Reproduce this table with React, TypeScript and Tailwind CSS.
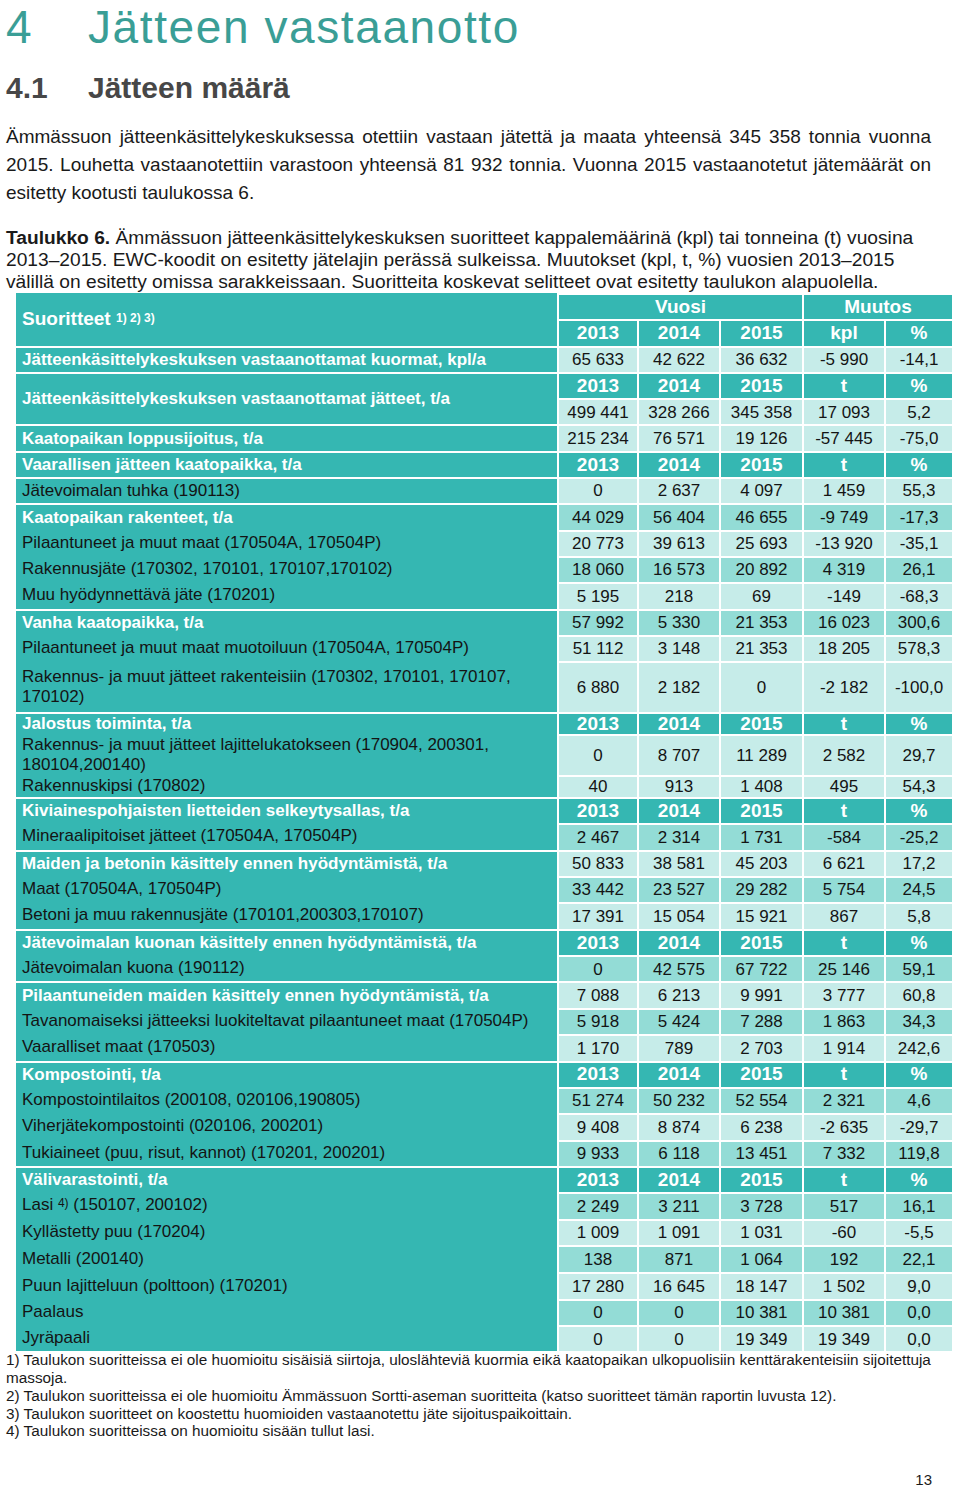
import React from "react";

type Shade = "l" | "d";

const numCellBase =
  "flex items-center justify-center border-l-2 border-t-2 border-white text-[17px] text-[#141414]";
const hdrCell =
  "flex items-center justify-center border-l-2 border-t-2 border-white bg-[#35b7b2] text-white font-bold text-[19px]";

function LabelCell({
  children,
  bold,
  top,
}: {
  children: React.ReactNode;
  bold?: boolean;
  top?: boolean;
}) {
  return (
    <div
      className={
        "flex items-center pl-[6px] pr-[4px] bg-[#35b7b2] text-[17px] leading-[20px] " +
        (bold ? "font-bold text-white " : "text-[#141414] ") +
        (top ? "border-t-2 border-white" : "")
      }
    >
      <div>{children}</div>
    </div>
  );
}

function DataRow({
  label,
  bold,
  top,
  vals,
  shade,
}: {
  label: React.ReactNode;
  bold?: boolean;
  top?: boolean;
  vals: string[];
  shade: Shade;
}) {
  const bg = shade === "d" ? "bg-[#93dcd6]" : "bg-[#c6ece9]";
  return (
    <>
      <LabelCell bold={bold} top={top}>
        {label}
      </LabelCell>
      {vals.map((v, i) => (
        <div key={i} className={numCellBase + " " + bg}>
          {v}
        </div>
      ))}
    </>
  );
}

function HdrRow({ label, unit }: { label: string; unit: string }) {
  return (
    <>
      <LabelCell bold top>
        {label}
      </LabelCell>
      <div className={hdrCell}>2013</div>
      <div className={hdrCell}>2014</div>
      <div className={hdrCell}>2015</div>
      <div className={hdrCell}>{unit}</div>
      <div className={hdrCell}>%</div>
    </>
  );
}

export default function App() {
  return (
    <div className="w-[960px] min-h-[1487px] overflow-hidden bg-white font-['Liberation_Sans',Arial,sans-serif] text-[#141414]">
      {/* Heading 1 */}
      <div className="flex pt-[4px] pl-[6px] text-[46px] leading-none tracking-[1.6px] text-[#3a9e96]">
        <span className="w-[82px]">4</span>
        <span>Jätteen vastaanotto</span>
      </div>
      {/* Heading 2 */}
      <div className="flex mt-[23px] pl-[6px] text-[30px] leading-[30px] font-bold text-[#474747]">
        <span className="w-[82px]">4.1</span>
        <span>Jätteen määrä</span>
      </div>

      {/* Paragraph */}
      <div className="mt-[20px] ml-[6px] w-[925px] text-[19px] leading-[28px] text-[#1a1a1a]">
        <div className="text-justify [text-align-last:justify] whitespace-nowrap">
          Ämmässuon jätteenkäsittelykeskuksessa otettiin vastaan jätettä ja maata yhteensä 345 358 tonnia vuonna
        </div>
        <div className="text-justify [text-align-last:justify] whitespace-nowrap">
          2015. Louhetta vastaanotettiin varastoon yhteensä 81 932 tonnia. Vuonna 2015 vastaanotetut jätemäärät on
        </div>
        <div>esitetty kootusti taulukossa 6.</div>
      </div>

      {/* Caption */}
      <div className="mt-[20px] pl-[6px] text-[19.2px] leading-[22px] text-[#1a1a1a] whitespace-nowrap">
        <div>
          <span className="font-bold">Taulukko 6.</span> Ämmässuon jätteenkäsittelykeskuksen suoritteet kappalemäärinä (kpl) tai tonneina (t) vuosina
        </div>
        <div>
          2013–2015. EWC-koodit on esitetty jätelajin perässä sulkeissa. Muutokset (kpl, t, %) vuosien 2013–2015
        </div>
        <div>välillä on esitetty omissa sarakkeissaan. Suoritteita koskevat selitteet ovat esitetty taulukon alapuolella.</div>
      </div>

      {/* Table */}
      <div className="mt-0 ml-[16px] w-[936px] grid grid-cols-[541px_80px_82px_83px_82px_68px] grid-rows-[repeat(14,26.3px)_51px_22px_41px_22px_26px_repeat(3,26.35px)_26.6px_repeat(12,26.35px)_27.5px_repeat(3,26.35px)]">
        {/* r0 - r1 */}
        <div className="row-span-2 flex items-center pl-[6px] bg-[#35b7b2] text-white font-bold text-[19px]">
          <span>
            Suoritteet <sup className="text-[12px] relative -top-[3px]">1) 2) 3)</sup>
          </span>
        </div>
        <div className={hdrCell + " col-span-3"}>Vuosi</div>
        <div className={hdrCell + " col-span-2"}>Muutos</div>
        <div className={hdrCell}>2013</div>
        <div className={hdrCell}>2014</div>
        <div className={hdrCell}>2015</div>
        <div className={hdrCell}>kpl</div>
        <div className={hdrCell}>%</div>

        {/* r2 */}
        <DataRow
          label="Jätteenkäsittelykeskuksen vastaanottamat kuormat, kpl/a"
          bold
          top
          vals={["65 633", "42 622", "36 632", "-5 990", "-14,1"]}
          shade="l"
        />
        {/* r3 - r4 */}
        <div className="row-span-2 flex items-center pl-[6px] bg-[#35b7b2] text-white font-bold text-[17px] border-t-2 border-white">
          Jätteenkäsittelykeskuksen vastaanottamat jätteet, t/a
        </div>
        <div className={hdrCell}>2013</div>
        <div className={hdrCell}>2014</div>
        <div className={hdrCell}>2015</div>
        <div className={hdrCell}>t</div>
        <div className={hdrCell}>%</div>
        <div className={numCellBase + " bg-[#c6ece9]"}>499 441</div>
        <div className={numCellBase + " bg-[#c6ece9]"}>328 266</div>
        <div className={numCellBase + " bg-[#c6ece9]"}>345 358</div>
        <div className={numCellBase + " bg-[#c6ece9]"}>17 093</div>
        <div className={numCellBase + " bg-[#c6ece9]"}>5,2</div>

        {/* r5 */}
        <DataRow label="Kaatopaikan loppusijoitus, t/a" bold top vals={["215 234", "76 571", "19 126", "-57 445", "-75,0"]} shade="l" />
        {/* r6 */}
        <HdrRow label="Vaarallisen jätteen kaatopaikka, t/a" unit="t" />
        {/* r7 */}
        <DataRow label="Jätevoimalan tuhka (190113)" top vals={["0", "2 637", "4 097", "1 459", "55,3"]} shade="l" />
        {/* r8 */}
        <DataRow label="Kaatopaikan rakenteet, t/a" bold top vals={["44 029", "56 404", "46 655", "-9 749", "-17,3"]} shade="d" />
        <DataRow label="Pilaantuneet ja muut maat (170504A, 170504P)" vals={["20 773", "39 613", "25 693", "-13 920", "-35,1"]} shade="l" />
        <DataRow label="Rakennusjäte (170302, 170101, 170107,170102)" vals={["18 060", "16 573", "20 892", "4 319", "26,1"]} shade="d" />
        <DataRow label="Muu hyödynnettävä jäte (170201)" vals={["5 195", "218", "69", "-149", "-68,3"]} shade="l" />
        {/* r12 */}
        <DataRow label="Vanha kaatopaikka, t/a" bold top vals={["57 992", "5 330", "21 353", "16 023", "300,6"]} shade="d" />
        <DataRow label="Pilaantuneet ja muut maat muotoiluun (170504A, 170504P)" vals={["51 112", "3 148", "21 353", "18 205", "578,3"]} shade="l" />
        <DataRow
          label={
            <>
              Rakennus- ja muut jätteet rakenteisiin (170302, 170101, 170107,
              <br />
              170102)
            </>
          }
          vals={["6 880", "2 182", "0", "-2 182", "-100,0"]}
          shade="l"
        />
        {/* r15 */}
        <HdrRow label="Jalostus toiminta, t/a" unit="t" />
        <DataRow
          label={
            <>
              Rakennus- ja muut jätteet lajittelukatokseen (170904, 200301,
              <br />
              180104,200140)
            </>
          }
          vals={["0", "8 707", "11 289", "2 582", "29,7"]}
          shade="l"
        />
        <DataRow label="Rakennuskipsi (170802)" vals={["40", "913", "1 408", "495", "54,3"]} shade="l" />
        {/* r18 */}
        <HdrRow label="Kiviainespohjaisten lietteiden selkeytysallas, t/a" unit="t" />
        <DataRow label="Mineraalipitoiset jätteet (170504A, 170504P)" vals={["2 467", "2 314", "1 731", "-584", "-25,2"]} shade="d" />
        <DataRow label="Maiden ja betonin käsittely ennen hyödyntämistä, t/a" bold top vals={["50 833", "38 581", "45 203", "6 621", "17,2"]} shade="l" />
        <DataRow label="Maat (170504A, 170504P)" vals={["33 442", "23 527", "29 282", "5 754", "24,5"]} shade="d" />
        <DataRow label="Betoni ja muu rakennusjäte (170101,200303,170107)" vals={["17 391", "15 054", "15 921", "867", "5,8"]} shade="l" />
        {/* r23 */}
        <HdrRow label="Jätevoimalan kuonan käsittely ennen hyödyntämistä, t/a" unit="t" />
        <DataRow label="Jätevoimalan kuona (190112)" vals={["0", "42 575", "67 722", "25 146", "59,1"]} shade="d" />
        <DataRow label="Pilaantuneiden maiden käsittely ennen hyödyntämistä, t/a" bold top vals={["7 088", "6 213", "9 991", "3 777", "60,8"]} shade="l" />
        <DataRow label="Tavanomaiseksi jätteeksi luokiteltavat pilaantuneet maat (170504P)" vals={["5 918", "5 424", "7 288", "1 863", "34,3"]} shade="d" />
        <DataRow label="Vaaralliset maat (170503)" vals={["1 170", "789", "2 703", "1 914", "242,6"]} shade="l" />
        {/* r28 */}
        <HdrRow label="Kompostointi, t/a" unit="t" />
        <DataRow label="Kompostointilaitos (200108, 020106,190805)" vals={["51 274", "50 232", "52 554", "2 321", "4,6"]} shade="d" />
        <DataRow label="Viherjätekompostointi (020106, 200201)" vals={["9 408", "8 874", "6 238", "-2 635", "-29,7"]} shade="l" />
        <DataRow label="Tukiaineet (puu, risut, kannot) (170201, 200201)" vals={["9 933", "6 118", "13 451", "7 332", "119,8"]} shade="d" />
        {/* r32 */}
        <HdrRow label="Välivarastointi, t/a" unit="t" />
        <DataRow
          label={
            <>
              Lasi <sup className="text-[12px] relative -top-[3px]">4)</sup> (150107, 200102)
            </>
          }
          vals={["2 249", "3 211", "3 728", "517", "16,1"]}
          shade="d"
        />
        <DataRow label="Kyllästetty puu (170204)" vals={["1 009", "1 091", "1 031", "-60", "-5,5"]} shade="l" />
        <DataRow label="Metalli (200140)" vals={["138", "871", "1 064", "192", "22,1"]} shade="d" />
        <DataRow label="Puun lajitteluun (polttoon) (170201)" vals={["17 280", "16 645", "18 147", "1 502", "9,0"]} shade="l" />
        <DataRow label="Paalaus" vals={["0", "0", "10 381", "10 381", "0,0"]} shade="d" />
        <DataRow label="Jyräpaali" vals={["0", "0", "19 349", "19 349", "0,0"]} shade="l" />
      </div>

      {/* Footnotes */}
      <div className="mt-0 pl-[6px] text-[15.3px] leading-[17.7px] text-[#1a1a1a] whitespace-nowrap">
        <div>
          1) Taulukon suoritteissa ei ole huomioitu sisäisiä siirtoja, uloslähteviä kuormia eikä kaatopaikan ulkopuolisiin kenttärakenteisiin sijoitettuja
        </div>
        <div>massoja.</div>
        <div>
          2) Taulukon suoritteissa ei ole huomioitu Ämmässuon Sortti-aseman suoritteita (katso suoritteet tämän raportin luvusta 12).
        </div>
        <div>3) Taulukon suoritteet on koostettu huomioiden vastaanotettu jäte sijoituspaikoittain.</div>
        <div>4) Taulukon suoritteissa on huomioitu sisään tullut lasi.</div>
      </div>

      {/* Page number */}
      <div className="flex justify-end mt-[31px] pr-[28px] text-[15px] leading-[18px] text-[#1a1a1a]">
        13
      </div>
    </div>
  );
}
